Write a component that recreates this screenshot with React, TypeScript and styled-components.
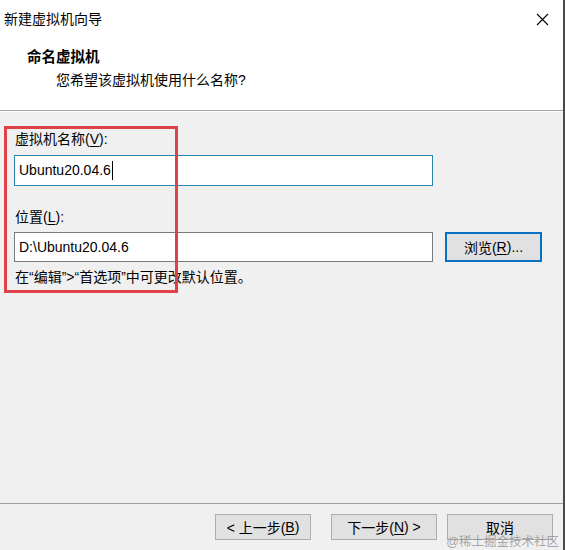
import React from "react";
import styled, { createGlobalStyle } from "styled-components";

const Global = createGlobalStyle`
  html, body { margin: 0; padding: 0; background: #f0f0f0; }
  body { font-family: "Liberation Sans", "Noto Sans CJK SC", sans-serif; font-size: 14px; color: #000; }
  * { box-sizing: border-box; }
`;

const Window = styled.div`
  position: relative;
  width: 565px;
  height: 550px;
  display: flex;
  flex-direction: column;
  background: #f0f0f0;
  border-right: 2px solid #4a4a4a;
  overflow: hidden;
`;

const Top = styled.div`
  background: #fff;
  border-bottom: 1px solid #a0a0a0;
  box-shadow: 0 1px 0 #fff;
  height: 111px;
  display: flex;
  flex-direction: column;
`;

const TitleBar = styled.div`
  height: 38px;
  display: flex;
  align-items: center;
  justify-content: space-between;
  padding: 0 14px 0 4px;
  font-size: 14px;
  line-height: 20px;
`;

const CloseIcon = styled.svg`
  width: 13px;
  height: 13px;
  display: block;
`;

const Header = styled.div`
  padding: 9px 0 0 27px;
  display: flex;
  flex-direction: column;
  gap: 3px;
`;

const HeaderTitle = styled.div`
  font-weight: bold;
  font-size: 14.5px;
  line-height: 20px;
`;

const HeaderSub = styled.div`
  padding-left: 29px;
  line-height: 20px;
`;

const Content = styled.div`
  position: relative;
  flex: 1;
  padding: 18px 0 0 14px;
  display: flex;
  flex-direction: column;
`;

const Label = styled.div<{ $gap: number }>`
  line-height: 20px;
  margin-top: ${(p) => p.$gap}px;
  padding-left: 1px;
`;

const Mn = styled.span`
  text-decoration: underline;
  text-underline-offset: 2px;
`;

const Row = styled.div`
  display: flex;
  align-items: center;
  gap: 12px;
`;

const Field = styled.div<{ $focused?: boolean; $h: number; $gap: number }>`
  width: 419px;
  height: ${(p) => p.$h}px;
  margin-top: ${(p) => p.$gap}px;
  background: #fff;
  border: 1px solid ${(p) => (p.$focused ? "#2a86b0" : "#7a7a7a")};
  display: flex;
  align-items: center;
  padding: 0 0 1px 4px;
  font-size: 14px;
`;

const Caret = styled.span`
  display: inline-block;
  width: 1px;
  height: 19px;
  background: #000;
  margin-left: 1px;
`;

const Button = styled.button<{ $w: number; $primary?: boolean; $gapLeft?: number }>`
  width: ${(p) => p.$w}px;
  height: ${(p) => (p.$primary ? 30 : 26)}px;
  margin-left: ${(p) => p.$gapLeft ?? 0}px;
  background: #e1e1e1;
  border: ${(p) => (p.$primary ? "2px solid #0a70c0" : "1px solid #adadad")};
  font-family: inherit;
  font-size: 14px;
  color: #000;
  padding: 0;
  display: flex;
  align-items: center;
  justify-content: center;
  white-space: pre;
`;

const Note = styled.div`
  margin-top: 5px;
  line-height: 20px;
  padding-left: 1px;
`;

const Annotation = styled.div`
  position: absolute;
  left: 4px;
  top: 15px;
  width: 174px;
  height: 167px;
  border: 3px solid #de4148;
  pointer-events: none;
`;

const Footer = styled.div`
  border-top: 1px solid #a0a0a0;
  height: 47px;
  display: flex;
  align-items: flex-start;
  justify-content: flex-end;
  padding: 10px 10px 0 0;
`;

const Watermark = styled.div`
  position: absolute;
  right: 4px;
  bottom: 0px;
  font-size: 12.5px;
  line-height: 16px;
  color: rgba(140, 140, 140, 0.75);
  pointer-events: none;
`;

export default function App() {
  return (
    <>
      <Global />
      <Window>
        <Top>
          <TitleBar>
            <span>新建虚拟机向导</span>
            <CloseIcon viewBox="0 0 13 13">
              <path d="M1 1 L12 12 M12 1 L1 12" stroke="#000" strokeWidth="1.1" fill="none" />
            </CloseIcon>
          </TitleBar>
          <Header>
            <HeaderTitle>命名虚拟机</HeaderTitle>
            <HeaderSub>您希望该虚拟机使用什么名称?</HeaderSub>
          </Header>
        </Top>
        <Content>
          <Label $gap={0}>
            虚拟机名称(<Mn>V</Mn>):
          </Label>
          <Field $focused $h={31} $gap={6}>
            Ubuntu20.04.6
            <Caret />
          </Field>
          <Label $gap={21}>
            位置(<Mn>L</Mn>):
          </Label>
          <Row>
            <Field $h={30} $gap={5}>D:\Ubuntu20.04.6</Field>
            <Button $w={97} $primary style={{ marginTop: 5 }}>
              浏览(<Mn>R</Mn>)...
            </Button>
          </Row>
          <Note>在“编辑”&gt;“首选项”中可更改默认位置。</Note>
          <Annotation />
        </Content>
        <Footer>
          <Button $w={96}>
            {"< 上一步("}
            <Mn>B</Mn>)
          </Button>
          <Button $w={106} $gapLeft={20}>
            下一步(<Mn>N</Mn>
            {") >"}
          </Button>
          <Button $w={106} $gapLeft={10}>取消</Button>
        </Footer>
        <Watermark>@稀土掘金技术社区</Watermark>
      </Window>
    </>
  );
}
